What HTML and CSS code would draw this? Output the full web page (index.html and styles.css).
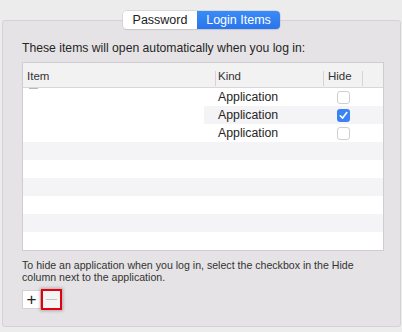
FILE: index.html
```html
<!DOCTYPE html>
<html>
<head>
<meta charset="utf-8">
<link rel="stylesheet" href="styles.css">
</head>
<body>
<div class="pane">
  <div class="tabs">
    <div class="seg">
      <span class="seg-item">Password</span>
      <span class="seg-item active">Login Items</span>
    </div>
  </div>
  <p class="heading">These items will open automatically when you log in:</p>
  <div class="table">
    <div class="thead">
      <div class="th th-item">Item</div>
      <div class="th th-kind">Kind</div>
      <div class="th th-hide">Hide</div>
      <div class="th th-rest"></div>
    </div>
    <div class="row">
      <div class="c-item"><span class="icon-stub"></span></div>
      <div class="c-kind">Application</div>
      <div class="c-hide"><span class="cb"></span></div>
    </div>
    <div class="row row-sel">
      <div class="c-item"></div>
      <div class="c-kind">Application</div>
      <div class="c-hide"><span class="cb checked"><svg viewBox="0 0 13 13" width="13" height="13"><path d="M3.3 6.8 L5.6 9.1 L9.8 3.6" fill="none" stroke="#fff" stroke-width="1.6" stroke-linecap="round" stroke-linejoin="round"/></svg></span></div>
    </div>
    <div class="row">
      <div class="c-item"></div>
      <div class="c-kind">Application</div>
      <div class="c-hide"><span class="cb"></span></div>
    </div>
    <div class="row stripe"></div>
    <div class="row"></div>
    <div class="row stripe"></div>
    <div class="row"></div>
    <div class="row stripe"></div>
    <div class="row"></div>
  </div>
  <p class="note">To hide an application when you log in, select the checkbox in the Hide column next to the application.</p>
  <div class="buttons">
    <span class="btn">+</span>
    <span class="btn minus"><span class="minus-bar"></span></span>
  </div>
</div>
</body>
</html>
```
FILE: styles.css
```css
html, body {
  margin: 0;
  padding: 0;
}
body {
  background: #ececec;
  font-family: "Liberation Sans", Arial, sans-serif;
  color: #262626;
  width: 402px;
  height: 332px;
  overflow: hidden;
}
.pane {
  margin: 20px 1px 0 2px;
  height: 307px;
  border: 1px solid #d4d2d4;
  border-radius: 3px;
  background: #e5e3e5;
  box-sizing: border-box;
  padding: 0 0 0 19px;
}
.tabs {
  display: flex;
  justify-content: center;
  margin: -10px 0 0 -19px;
}
.seg {
  display: flex;
  height: 18px;
  border-radius: 4px;
  box-shadow: 0 0 0 0.5px #c8c6c8, 0 1px 1px rgba(0,0,0,0.12);
  overflow: hidden;
  font-size: 12.5px;
}
.seg-item {
  display: flex;
  align-items: center;
  justify-content: center;
  background: #ffffff;
  color: #222;
  width: 74px;
}
.seg-item.active {
  width: 83px;
  background: linear-gradient(#3a8bf7, #2a74ec);
  color: #fff;
}
.heading {
  margin: 11px 0 0 0;
  font-size: 12.2px;
  line-height: 16px;
  color: #262626;
}
.table {
  margin-top: 6px;
  width: 362px;
  border: 1px solid #cfcdcf;
  background: #ffffff;
  box-sizing: border-box;
}
.thead {
  display: flex;
  height: 25px;
  background: #f3f2f3;
  border-bottom: 1px solid #d9d7d9;
  box-sizing: border-box;
  font-size: 11.5px;
  color: #333;
}
.th {
  display: flex;
  align-items: center;
  padding-top: 1px;
  box-sizing: border-box;
  position: relative;
}
.th-item { width: 192px; padding-left: 4px; }
.th-kind { width: 108px; padding-left: 3px; }
.th-hide { width: 39px; padding-left: 5px; }
.th-rest { flex: 1; }
.th-kind::before, .th-hide::before, .th-rest::before {
  content: "";
  position: absolute;
  left: 0;
  top: 8px;
  bottom: 1px;
  width: 1px;
  background: #d6d4d6;
}
.row {
  display: flex;
  height: 18px;
  align-items: center;
  font-size: 12.3px;
}
.stripe { background: #f4f3f6; }
.row-sel {
  background: linear-gradient(to right, #ffffff 181px, #f4f3f6 181px);
}
.c-item {
  width: 192px;
  height: 18px;
  position: relative;
}
.icon-stub {
  position: absolute;
  left: 6px;
  top: 0;
  width: 9px;
  height: 1px;
  background: #b8b8b8;
}
.c-kind {
  width: 108px;
  padding-left: 3px;
  padding-bottom: 1px;
  box-sizing: border-box;
  color: #262626;
}
.c-hide {
  width: 39px;
  display: flex;
  justify-content: center;
  padding-left: 1px;
  box-sizing: border-box;
}
.cb {
  display: block;
  width: 13px;
  height: 13px;
  box-sizing: border-box;
  border: 1px solid #cfcfcf;
  border-radius: 3px;
  background: #fff;
}
.cb.checked {
  border: none;
  background: #3b82f5;
}
.cb svg { display: block; }
.note {
  margin: 8px 0 0 0;
  font-size: 10.6px;
  line-height: 12px;
  color: #333;
  width: 345px;
}
.buttons {
  display: flex;
  margin-top: 7px;
}
.btn {
  display: flex;
  align-items: center;
  justify-content: center;
  width: 19px;
  height: 19px;
  background: #fff;
  border: 1px solid #d3d1d3;
  box-sizing: border-box;
  font-size: 17px;
  line-height: 1;
  color: #222;
}
.btn.minus {
  width: 21px;
  height: 21px;
  margin-top: -1px;
  background: #f5f4f5;
  border: 2px solid #e5000d;
  box-shadow: 0 0 3px 1px rgba(0,0,0,0.25);
}
.minus-bar {
  display: block;
  width: 11px;
  height: 1px;
  background: #c4c4c4;
}
```
